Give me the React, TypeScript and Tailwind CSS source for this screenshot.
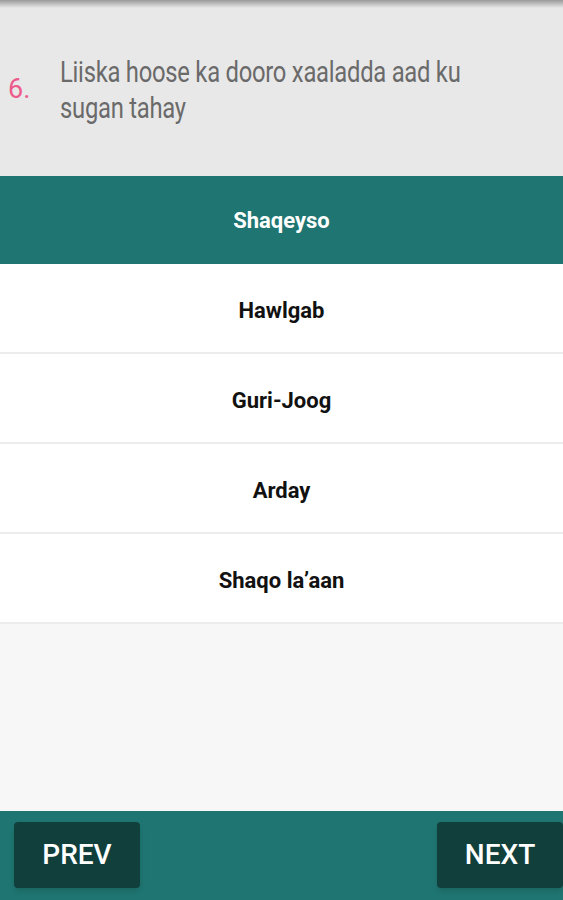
const options = ['Shaqeyso', 'Hawlgab', 'Guri-Joog', 'Arday', 'Shaqo la’aan'];

export default function App() {
  const selected = 0;
  return (
    <div className="flex h-[900px] w-full flex-col overflow-hidden bg-[#f7f7f7] font-['Roboto',sans-serif]">
      <div className="h-[8px] bg-gradient-to-b from-[#9a9a9a] to-[#e8e8e8]" />
      <div className="flex h-[168px] items-start bg-[#e8e8e8] pt-[46px]">
        <span className="w-[60px] shrink-0 pl-[8px] pt-[22px] text-[27px] leading-none text-[#ec5b8b]">6.</span>
        <p className="w-[500px] shrink-0 origin-left scale-x-[0.82] text-[29px] leading-[36px] tracking-[-0.3px] text-[#6a6a6a]">
          Liiska hoose ka dooro xaaladda aad ku sugan tahay
        </p>
      </div>
      <div className="flex flex-col">
        {options.map((o, i) => (
          <div
            key={o}
            className={
              i === selected
                ? 'flex h-[88px] items-center justify-center bg-[#1f7571] text-[22px] font-bold text-white'
                : 'flex h-[90px] items-center justify-center border-b-2 border-[#ececec] bg-white pt-[4px] text-[22px] font-bold text-[#111]'
            }
          >
            {o}
          </div>
        ))}
      </div>
      <div className="flex-1" />
      <div className="flex h-[89px] items-start justify-between bg-[#1f7571] pt-[11px]">
        <button className="ml-[14px] flex h-[66px] w-[126px] items-center justify-center rounded-[4px] bg-[#113f3c] text-[28px] font-medium text-white shadow-md">
          PREV
        </button>
        <button className="flex h-[66px] w-[126px] items-center justify-center rounded-[4px] bg-[#113f3c] text-[28px] font-medium text-white shadow-md">
          NEXT
        </button>
      </div>
    </div>
  );
}
